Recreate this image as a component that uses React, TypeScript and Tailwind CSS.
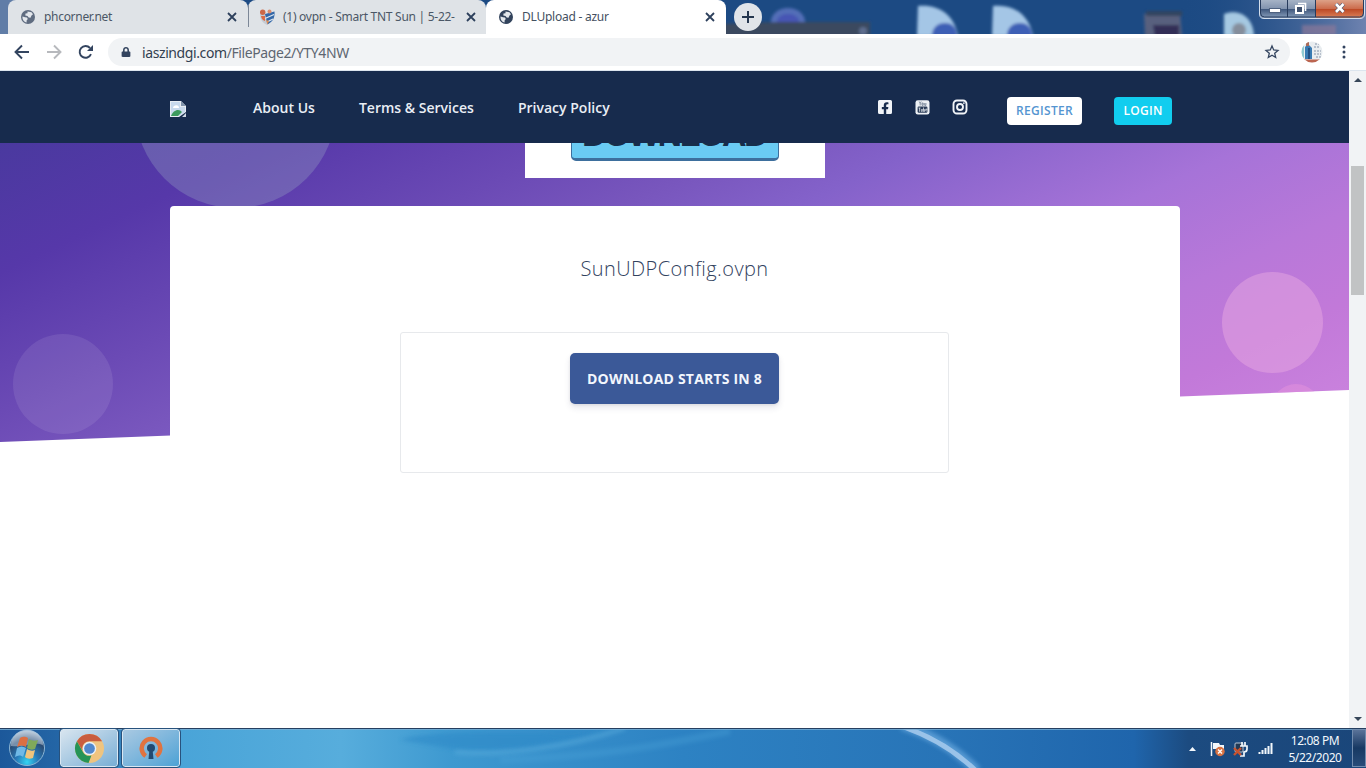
import type { ReactNode } from "react";
import { FaFacebookSquare, FaLock } from "react-icons/fa";

const UI_FONT = "font-['Noto_Sans','Open_Sans',sans-serif]";

function GlobeIcon({ color }: { color: string }) {
  return (
    <svg width="14" height="14" viewBox="0 0 14 14" className="shrink-0">
      <circle cx="7" cy="7" r="7" fill={color} />
      <path
        d="M1.500 6.500 4 7.200l2 .2.800 1.600-1.200 1.400v2.200C3 12 1.200 9.500 1.500 6.500ZM6.500 1.500l4 .8 1.500 2-1.500 1.300-1 2.200-1.800-.3L6.500 6l-2.200-.4.200-2 2-.4Z"
        fill="#e3e7ec"
      />
    </svg>
  );
}

function ShieldIcon() {
  return (
    <svg width="17" height="17" viewBox="0 0 17 17" className="shrink-0">
      <path d="M1 5h7v11C3 13.500 1 10 1 5Z" fill="#c5ccd5" />
      <path d="M6 5 15.500 2.500c.5 6-1.500 10-7 13Z" fill="#3468a8" />
      <path d="M2 7h4v5C3.500 11 2.500 10 2 7Z" fill="#db6b45" />
      <path d="m6 9.500 9-4M8 13l6-3" stroke="#dfe7f0" strokeWidth="1.300" />
      <path d="m7 11 3 1-1.500 3.500Z" fill="#e08b50" />
      <circle cx="3.700" cy="3.300" r="2.700" fill="#cc6848" />
      <circle cx="10.500" cy="2.500" r="2" fill="#d98e72" />
    </svg>
  );
}

function CloseIcon() {
  return (
    <svg width="10" height="10" viewBox="0 0 10 10" className="shrink-0">
      <path d="m1 1 8 8M9 1 1 9" stroke="#2d405c" strokeWidth="1.800" />
    </svg>
  );
}

/** The old "You / Tube" square mark. */
function YoutubeSquare() {
  return (
    <svg width="15" height="15" viewBox="0 0 15 15">
      <rect x=".5" y=".3" width="14" height="14.200" rx="2.300" fill="#edf1f5" />
      <path
        d="m4.200 1.500 1 2v2m1-4-1 2M7 3v2.300h1.200V3H7Zm2.700 0v2.400h1.200V3"
        stroke="#68778c"
        strokeWidth=".8"
        fill="none"
      />
      <rect x="2.600" y="6.500" width="9.800" height="6.300" rx="1.200" fill="#2b3d59" />
      <path
        d="M3.500 8h2m-1 0v3.700M6.300 9v2.400h1V9m1.200-1.500v4h1v-2h-1m3.300 1.500h-1V9h1v1"
        stroke="#edf1f5"
        strokeWidth=".7"
        fill="none"
      />
    </svg>
  );
}

function InstagramIcon() {
  return (
    <svg width="16" height="16" viewBox="0 0 16 16" fill="none" stroke="currentColor">
      <rect x="1.500" y="1.500" width="13" height="13" rx="3.500" strokeWidth="1.900" />
      <circle cx="8" cy="8" r="3" strokeWidth="1.900" />
      <circle cx="11.900" cy="4.100" r=".9" fill="currentColor" stroke="none" />
    </svg>
  );
}

function TabStrip() {
  return (
    <div className="relative flex h-[34px] shrink-0 overflow-hidden bg-[#1c4a83] pl-2">
      <DesktopBehindGlass />
      <div className="relative z-10 flex h-full w-[240px] items-center rounded-t-lg bg-[#dfe3e7] pl-[13px] pr-[11px] text-[#4b5766]">
        <GlobeIcon color="#5f6c80" />
        <span className="ml-[9px] flex-1 text-[12px] tracking-[-0.3px]">phcorner.net</span>
        <CloseIcon />
        <span className="absolute -right-px top-[5px] h-[22px] w-px bg-[#7c8797]" />
      </div>
      <div className="relative flex h-full w-[238px] items-center rounded-t-lg bg-[#dfe3e7] pl-[11px] pr-[10px] text-[#4b5766]">
        <ShieldIcon />
        <span className="ml-[7px] flex-1 overflow-hidden whitespace-nowrap text-[12px] tracking-[-0.27px]">
          (1) ovpn - Smart TNT Sun | 5-22-
        </span>
        <CloseIcon />
      </div>
      <div className="relative flex h-full w-[240px] items-center rounded-t-lg bg-white pl-[13px] pr-[11px] text-[#44505f]">
        <GlobeIcon color="#32435c" />
        <span className="ml-[9px] flex-1 text-[12px] tracking-[-0.25px]">DLUpload - azur</span>
        <CloseIcon />
      </div>
      <div className="relative ml-2 mt-[3px] flex size-7 items-center justify-center rounded-full bg-[#e0e4e9]">
        <svg width="12" height="12" viewBox="0 0 12 12">
          <path d="M6 0v12M0 6h12" stroke="#24364f" strokeWidth="2" />
        </svg>
      </div>
      <WindowControls />
    </div>
  );
}

/** Blurred desktop icons showing through the Aero title bar. */
function DesktopBehindGlass() {
  return (
    <svg className="absolute inset-0" width="1366" height="34" viewBox="0 0 1366 34">
      <defs>
        <filter id="glass" x="-30%" y="-30%" width="160%" height="160%">
          <feGaussianBlur stdDeviation="1.800" />
        </filter>
        <linearGradient id="titleEdge" x1="0" x2="1">
          <stop offset="0" stopColor="#1c4a83" stopOpacity="0" />
          <stop offset="1" stopColor="#6f83b0" />
        </linearGradient>
      </defs>
      <rect width="20" height="34" fill="#607da7" />
      <rect x="1180" width="186" height="34" fill="url(#titleEdge)" />
      <g filter="url(#glass)">
        <ellipse cx="788" cy="22" rx="17" ry="14" fill="#526eb7" />
        <ellipse cx="788" cy="22" rx="11" ry="8" fill="#4654b4" />
        <path d="M720 24 780 22h90v14H720Z" fill="#3b485f" />
        <circle cx="863" cy="31" r="4" fill="#5d6d8e" />
        <path d="M918 6c20-2 36 8 40 30h-41Z" fill="#a4c6e6" />
        <path d="M932 36c0-9 6-13 13-13s12 4 12 13Z" fill="#3e5fb5" />
        <path d="M993 6c20-2 36 8 40 30h-41Z" fill="#a4c6e6" />
        <path d="M1007 36c0-9 6-13 13-13s12 4 12 13Z" fill="#3e5fb5" />
        <path d="M1144 14h36l2 22h-37Z" fill="#59617e" />
        <path d="M1153 25h26v12h-24Z" fill="#302d57" />
        <path d="M1146 11h36v5h-36Z" fill="#32445e" />
        <path d="M1224 36V14c12-5 29 0 30 22Z" fill="#a6c9e2" />
        <circle cx="1239" cy="30" r="7" fill="#858e9c" />
        <path d="M1302 25h34v10h-34Z" fill="#8c7999" opacity=".7" />
      </g>
    </svg>
  );
}

function WindowControls() {
  return (
    <svg className="absolute right-0 top-0" width="108" height="20" viewBox="0 0 108 20">
      <defs>
        <linearGradient id="ctl" x2="0" y2="1">
          <stop offset="0" stopColor="#a6b3c6" />
          <stop offset=".48" stopColor="#8294af" />
          <stop offset=".52" stopColor="#40587d" />
          <stop offset="1" stopColor="#8ba1be" />
        </linearGradient>
        <linearGradient id="ctlClose" x2="0" y2="1">
          <stop offset="0" stopColor="#dda187" />
          <stop offset=".48" stopColor="#cc6c4c" />
          <stop offset=".52" stopColor="#bd4a26" />
          <stop offset="1" stopColor="#dc835b" />
        </linearGradient>
      </defs>
      <path d="M2 0h104v14q0 4-4 4H6q-4 0-4-4Z" fill="url(#ctl)" />
      <path d="M58 0h47v14q0 4-4 4H58Z" fill="url(#ctlClose)" />
      <path d="M1.500-1v15q0 4.500 4.500 4.500h96q4.500 0 4.500-4.500V-1" stroke="#d4dfed" fill="none" />
      <path d="M2.500-1v14q0 4 4 4h95q4 0 4-4V-1M29.500 0v17M57.500 0v17" stroke="#273b5c" fill="none" />
      <rect x="11.500" y="8.500" width="11" height="4" fill="#fff" stroke="#4f6280" />
      <path d="M40 3.500h7.500V11" stroke="#fff" strokeWidth="1.600" fill="none" />
      <rect x="38" y="6" width="7" height="7" fill="#3e506e" stroke="#fff" strokeWidth="2" />
      <path d="m78 4 7.500 8M85.500 4 78 12" stroke="#49516c" strokeWidth="4" />
      <path d="m78 4 7.500 8M85.500 4 78 12" stroke="#fff" strokeWidth="2.600" />
    </svg>
  );
}

function AddressBar() {
  return (
    <div className="flex h-[37px] shrink-0 items-center border-b border-[#dce5ee] bg-white pl-[14px] pr-5">
      <svg width="80" height="16" viewBox="0 0 80 16">
        <g fill="none" strokeWidth="1.900">
          <path d="M15 8H2M8 1.500 1.500 8 8 14.500" stroke="#33445f" />
          <path d="M33 8h13M40 1.500 46.500 8 40 14.500" stroke="#b7b9bd" />
          <path d="M77 10.200A5.900 5.900 0 1 1 76 4" stroke="#33445f" />
        </g>
        <path d="M79 1v6h-6Z" fill="#33445f" />
      </svg>
      <div className="ml-[14px] flex h-7 w-[1182px] items-center rounded-full bg-[#f1f3f5] pl-[13px] pr-[10px]">
        <FaLock className="size-[10px] text-[#33445f]" />
        <span className="ml-[11px] flex-1 text-[14px] tracking-[-0.4px] text-[#5e6671]">
          <span className="text-[#333f50]">iaszindgi.com</span>/FilePage2/YTY4NW
        </span>
        <svg width="16" height="16" viewBox="0 0 16 16">
          <path
            d="m8 2 1.700 4 4.300.4-3.300 2.900 1 4.200L8 11.300l-3.700 2.200 1-4.200L2 6.400 6.300 6Z"
            stroke="#33445f"
            strokeWidth="1.300"
            fill="none"
          />
        </svg>
      </div>
      <svg className="ml-[10px]" width="24" height="24" viewBox="0 0 24 24">
        <clipPath id="avatar">
          <circle cx="12" cy="12" r="10.500" />
        </clipPath>
        <g clipPath="url(#avatar)">
          <path d="M0 0h24v24H0Z" fill="#e9edf0" />
          <path d="M0 2h4v17H0Z" fill="#8fcad1" />
          <path d="m5 7 3-3 4 4v11H5Z" fill="#397bb2" />
          <path d="M6 2h3v4H6Z" fill="#ac6b58" />
          <path d="M9 8v11" stroke="#235184" strokeWidth="2" />
          <path d="M15 4h4m-5 3h6m-6 4h7m-7 3h7m-5 3h5" stroke="#8593a8" strokeDasharray="2 1" />
          <path d="M0 19.500h24V24H0Z" fill="#bc6550" />
        </g>
      </svg>
      <svg className="ml-auto" width="4" height="14" viewBox="0 0 4 14">
        <g fill="#33445f">
          <circle cx="2" cy="2" r="1.500" />
          <circle cx="2" cy="7" r="1.500" />
          <circle cx="2" cy="12" r="1.500" />
        </g>
      </svg>
    </div>
  );
}

function BrokenImage() {
  return (
    <svg width="16" height="16" viewBox="0 0 16 16">
      <path d="M0 0h11l5 5v6L9 16H0Z" fill="#e7ecf2" />
      <path d="M1 1h9v5h5v5l-6 4H1Z" fill="#c8d9ec" />
      <path d="M3 7c0-3 6-4 6 0Z" fill="#fff" />
      <path d="M1 15c2-6 8-8 11-4l-4 4Z" fill="#3c9a5d" />
      <path d="M11 0v5h5Z" fill="#8194ab" />
      <path d="m16 12-4 4h4Z" fill="#cfd9e5" />
    </svg>
  );
}

function SiteHeader() {
  return (
    <header className="relative z-10 flex h-[72px] shrink-0 items-center bg-[#172b4d] pl-[170px] pr-[169px] text-[#f1f4f8]">
      <div className="mt-1">
        <BrokenImage />
      </div>
      <nav className="ml-[67px] flex gap-11 whitespace-nowrap text-[14px] font-semibold tracking-[0.01px] text-[#e9eef5]">
        <span>About Us</span>
        <span>Terms &amp; Services</span>
        <span>Privacy Policy</span>
      </nav>
      <div className="ml-auto mr-[39px] flex items-center gap-[22px]">
        <FaFacebookSquare className="size-4" />
        <YoutubeSquare />
        <InstagramIcon />
      </div>
      <HeaderButton className="w-[75px] bg-white text-[#5595d1]">REGISTER</HeaderButton>
      <HeaderButton className="ml-8 mr-2 w-[58px] bg-[#11cdef] text-white">LOGIN</HeaderButton>
    </header>
  );
}

function HeaderButton({ className, children }: { className: string; children: ReactNode }) {
  return (
    <button
      className={`mt-2 flex h-7 items-center justify-center rounded text-[12px] font-semibold tracking-[0.3px] ${className}`}
    >
      {children}
    </button>
  );
}

function HeroShapes() {
  return (
    <div className="absolute inset-x-0 top-0 h-[299px] bg-[linear-gradient(155deg,#4a399f_0%,#5638a9_14%,#6b4ab5_29%,#7856bd_38%,#8462ca_47%,#a673d8_63%,#b878d9_75%,#c279d9_85%,#cd86df_100%)] [clip-path:polygon(0_0,100%_0,100%_247px,0_299px)]">
      <div className="absolute left-[135px] top-[-136px] size-[201px] rounded-full bg-[#95a0c4]/35" />
      <div className="absolute left-[13px] top-[191px] size-[100px] rounded-full bg-white/[0.09]" />
      <div className="absolute left-[1222px] top-[129px] size-[101px] rounded-full bg-[#ecaee2]/45" />
      <div className="absolute left-[1271px] top-[241px] size-[50px] rounded-full bg-[#df90dc]/60" />
    </div>
  );
}

function DownloadPage() {
  return (
    <main className="relative flex flex-1 flex-col items-center">
      <HeroShapes />
      <div className="relative -mt-10 flex h-[75px] w-[300px] items-end justify-center bg-white pb-[17px]">
        <div className="flex h-[52px] w-[208px] items-center justify-center rounded-[5px] border border-b-[3px] border-[#3d6f9d] bg-[#6acbf3] pb-px pr-px font-['Liberation_Sans',sans-serif] text-[34px] font-bold leading-none tracking-[-2.500px] text-[#172d4a]">
          DOWNLOAD
        </div>
      </div>
      <section className="relative mt-7 flex w-[1010px] flex-1 flex-col items-center rounded-t bg-white">
        <h1 className="mt-[48px] text-[20px] font-light leading-[30px] tracking-[0.42px] text-[#32425e]">
          SunUDPConfig.ovpn
        </h1>
        <div className="mt-[48px] flex h-[141px] w-[549px] justify-center rounded-[3px] border border-[#e7e9ec] pt-5">
          <button className="h-[51px] w-[209px] rounded-[5px] bg-[#3b5998] text-[14px] font-bold tracking-[0.2px] text-[#f2f6fd] shadow-[0_4px_6px_rgba(50,50,93,.11),0_1px_3px_rgba(0,0,0,.08)]">
            DOWNLOAD STARTS IN 8
          </button>
        </div>
      </section>
    </main>
  );
}

function Scrollbar() {
  return (
    <div className="flex w-[17px] shrink-0 flex-col items-center bg-[#f1f3f5]">
      <span className="mt-[7px] h-0 w-0 border-x-4 border-b-4 border-x-transparent border-b-[#374659]" />
      <div className="mt-[84px] h-[129px] w-[13px] bg-[#c1c3c4]" />
      <span className="mb-[7px] mt-auto h-0 w-0 border-x-4 border-t-4 border-x-transparent border-t-[#374659]" />
    </div>
  );
}

function WindowsOrb() {
  return (
    <svg width="38" height="38" viewBox="0 0 38 38">
      <defs>
        <radialGradient id="orb" cy=".9" r=".9">
          <stop offset="0" stopColor="#34d5f2" />
          <stop offset=".35" stopColor="#2879b8" />
          <stop offset=".7" stopColor="#294b73" />
          <stop offset="1" stopColor="#b5c6d8" />
        </radialGradient>
      </defs>
      <circle cx="19" cy="19" r="17.500" fill="url(#orb)" stroke="#8ab5d5" />
      <path d="M3 17a16 16 0 0 1 32-1c-10-4-20 3-32 1Z" fill="#d4e1ec" opacity=".45" />
      <path d="M12 9c3-2 6-1 8 0l-2 9c-3-2-6-2-9 0Z" fill="#dc7043" />
      <path d="M21 10c3 2 6 2 9 1l-3 9c-3 1-5 1-8-1Z" fill="#80a95a" />
      <path d="M9 19c3-2 6-2 9 0l-3 9c-2-2-5-2-8 0Z" fill="#70b9e6" />
      <path d="M19 20c3 2 6 2 8 1l-2 8c-3 1-6 1-8-1Z" fill="#f0c47c" />
    </svg>
  );
}

function ChromeIcon() {
  return (
    <svg width="31" height="31" viewBox="0 0 32 32">
      <circle cx="16" cy="16" r="15" fill="#efc47f" />
      <path d="M3 8.500A15 15 0 0 1 29 8.500H16a7.500 7.500 0 0 0-7 10Z" fill="#c95d3f" />
      <path d="M3 8.500 9.500 20A7.500 7.500 0 0 0 18 23.200L15 31A15 15 0 0 1 3 8.500Z" fill="#269457" />
      <circle cx="16" cy="16" r="7" fill="#e9f0f7" />
      <circle cx="16" cy="16" r="5.500" fill="#5188cd" />
    </svg>
  );
}

function OpenVpnIcon() {
  return (
    <svg width="24" height="24" viewBox="0 0 24 24">
      <path d="M6.700 20A9.300 9.300 0 1 1 17.300 20" fill="none" stroke="#e07340" strokeWidth="4.500" />
      <circle cx="12" cy="12" r="4" fill="#224970" />
      <path d="M10.500 13h3l1 10h-5Z" fill="#224970" />
    </svg>
  );
}

function TaskbarBackground() {
  return (
    <svg className="absolute inset-0" width="1366" height="40" viewBox="0 0 1366 40">
      <defs>
        <linearGradient id="bar">
          <stop offset="0" stopColor="#1c589a" />
          <stop offset=".05" stopColor="#2568a8" />
          <stop offset=".13" stopColor="#49a4d8" />
          <stop offset=".25" stopColor="#57addc" />
          <stop offset=".33" stopColor="#3e99d0" />
          <stop offset=".5" stopColor="#2d82c3" />
          <stop offset=".69" stopColor="#2874b7" />
          <stop offset=".83" stopColor="#1f65ac" />
          <stop offset=".87" stopColor="#1c4b80" />
          <stop offset="1" stopColor="#1a467a" />
        </linearGradient>
        <filter id="streak" x="-10%" y="-50%" width="120%" height="200%">
          <feGaussianBlur stdDeviation="2" />
        </filter>
      </defs>
      <rect width="1366" height="40" fill="url(#bar)" />
      <path d="M400 12c30-12 150-6 200-8-45 14-80 20-140 18Z" fill="#2f8ac8" opacity=".6" filter="url(#streak)" />
      <path d="M455 24c45 4 110-4 170-24" stroke="#5aacdc" strokeWidth="4" fill="none" opacity=".6" filter="url(#streak)" />
      <path d="M500 32c90-3 150-12 230-29" stroke="#4ba3d8" strokeWidth="7" fill="none" opacity=".35" filter="url(#streak)" />
      <path d="M902-3q45 15 75 46" stroke="#75b2e5" strokeWidth="10" fill="none" opacity=".6" filter="url(#streak)" />
      <path d="M904-1q42 15 71 43" stroke="#a2c8eb" strokeWidth="5" fill="none" opacity=".9" />
      <path d="M0 .5h1366" stroke="#263f60" />
      <path d="M0 1.500h1366" stroke="#79afd5" opacity=".8" />
    </svg>
  );
}

function TrayIcons() {
  return (
    <svg width="86" height="20" viewBox="0 0 86 20">
      <path d="m1 12 3.500-4L8 12Z" fill="#f3f8fc" />
      <path d="M23.500 3v14" stroke="#f3f8fc" strokeWidth="1.500" />
      <path d="M25 4h6l1 2h4v5h-6l-1-1h-4Z" fill="#f3f8fc" />
      <circle cx="32" cy="12.500" r="4.700" fill="#d87343" />
      <path d="m30 10.500 4 4m0-4-4 4" stroke="#fff" strokeWidth="1.400" />
      <rect x="47" y="4" width="8" height="9" rx="1" fill="#233955" stroke="#b8c5d3" />
      <path d="M52 7h7v3q0 3-3 3v4h-4M54 3v4m3-4v4" stroke="#f3f8fc" strokeWidth="1.700" fill="none" />
      <path d="m46 9 7 7m0-7-7 7" stroke="#c9532f" strokeWidth="2.400" />
      <path
        d="M71.500 15v-2m3 2v-4m3 4V9m3 6V7m3 8V4"
        stroke="#f3f8fc"
        strokeWidth="2"
      />
    </svg>
  );
}

function Taskbar() {
  return (
    <footer className="relative flex h-10 shrink-0 items-center overflow-hidden pl-2">
      <TaskbarBackground />
      <div className="relative flex w-full items-center">
        <WindowsOrb />
        <TaskButton className="ml-[14px] bg-linear-to-br from-[#d8e5ef] to-[#78aed5]">
          <ChromeIcon />
        </TaskButton>
        <TaskButton className="ml-[4px] bg-linear-to-br from-[#a9c9e2] to-[#4ba2d5]">
          <OpenVpnIcon />
        </TaskButton>
        <div className="ml-auto mr-[13px] mt-[2px]">
          <TrayIcons />
        </div>
        <div className="mr-[9px] mt-[2px] w-[56px] whitespace-nowrap text-center text-[12px] leading-[17px] tracking-[-0.43px] text-[#f3f8fd]">
          <div>12:08 PM</div>
          <div>5/22/2020</div>
        </div>
        <div className="h-[38px] w-[14px] border border-[#718cae] bg-linear-to-b from-[#5a7399] via-[#173963] to-[#284c79]" />
      </div>
    </footer>
  );
}

function TaskButton({ className, children }: { className: string; children: ReactNode }) {
  return (
    <div
      className={`flex h-[38px] w-[58px] items-center justify-center rounded-[3px] border border-[#d9e7f2] outline outline-[#28527d] ${className}`}
    >
      {children}
    </div>
  );
}

export default function App() {
  return (
    <div className={`flex h-[768px] w-[1366px] flex-col overflow-hidden bg-white ${UI_FONT}`}>
      <TabStrip />
      <AddressBar />
      <div className="flex min-h-0 flex-1">
        <div className="flex min-w-0 flex-1 flex-col font-['Open_Sans',sans-serif]">
          <SiteHeader />
          <DownloadPage />
        </div>
        <Scrollbar />
      </div>
      <Taskbar />
    </div>
  );
}
